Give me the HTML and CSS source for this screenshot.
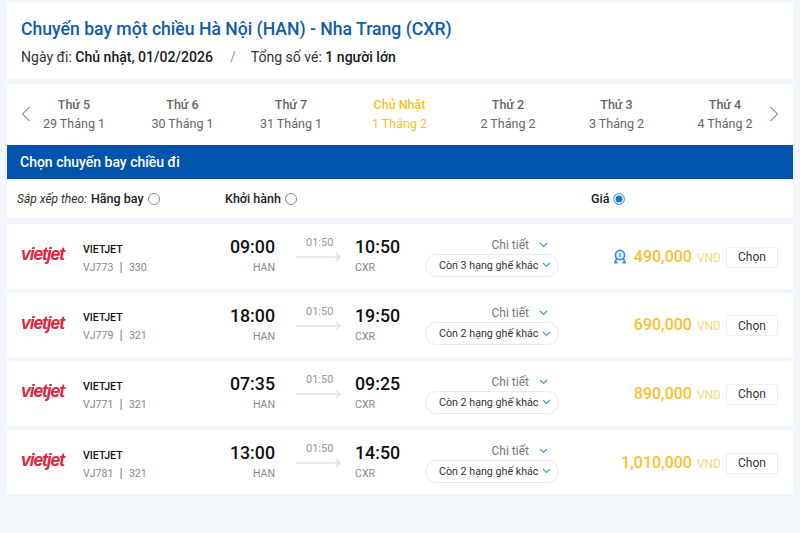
FILE: index.html
```html
<!DOCTYPE html>
<html lang="vi">
<head>
<meta charset="utf-8">
<title>Chuyến bay</title>
<link rel="stylesheet" href="styles.css">
</head>
<body>
<main class="page">
  <section class="summary">
    <h1 class="title">Chuyến bay một chiều Hà Nội (HAN) - Nha Trang (CXR)</h1>
    <p class="meta"><span>Ngày đi: <b>Chủ nhật, 01/02/2026</b></span><i class="slash">/</i><span>Tổng số vé: <b>1 người lớn</b></span></p>
  </section>
  <section class="search">
    <div class="dates">
      <svg class="nav" width="10" height="16" viewBox="0 0 10 16"><path d="M8.5 1 1.5 8l7 7" fill="none" stroke="#555" stroke-width="1"/></svg>
      <div class="date-list">
        <div class="date"><b>Thứ 5</b><span>29 Tháng 1</span></div>
        <div class="date"><b>Thứ 6</b><span>30 Tháng 1</span></div>
        <div class="date"><b>Thứ 7</b><span>31 Tháng 1</span></div>
        <div class="date active"><b>Chủ Nhật</b><span>1 Tháng 2</span></div>
        <div class="date"><b>Thứ 2</b><span>2 Tháng 2</span></div>
        <div class="date"><b>Thứ 3</b><span>3 Tháng 2</span></div>
        <div class="date"><b>Thứ 4</b><span>4 Tháng 2</span></div>
      </div>
      <svg class="nav" width="10" height="16" viewBox="0 0 10 16"><path d="M1.5 1l7 7-7 7" fill="none" stroke="#555" stroke-width="1"/></svg>
    </div>
    <h2 class="bar">Chọn chuyến bay chiều đi</h2>
    <div class="sort">
      <div class="sort-a"><em>Sắp xếp theo:</em> <b>Hãng bay</b><span class="radio"></span></div>
      <div class="sort-b"><b>Khởi hành</b><span class="radio"></span></div>
      <div class="sort-c"><b>Giá</b><span class="radio on"></span></div>
    </div>
  </section>
  <section class="flights">
    <article class="flight">
      <div class="logo">vietjet</div>
      <div class="airline"><b>VIETJET</b><span>VJ773 <i>|</i> 330</span></div>
      <div class="dep"><b>09:00</b><span>HAN</span></div>
      <div class="dur"><span>01:50</span><svg width="46" height="10" viewBox="0 0 46 10"><path d="M0 5h44M40 1l4 4-4 4" fill="none" stroke="#dfe2e5" stroke-width="1.4"/></svg></div>
      <div class="arr"><b>10:50</b><span>CXR</span></div>
      <div class="info">
        <div class="detail">Chi tiết<svg class="chev" width="9" height="6" viewBox="0 0 9 6"><path d="M1 1l3.5 3.5L8 1" fill="none" stroke="#4a9bd4" stroke-width="1.2"/></svg></div>
        <div class="pill">Còn 3 hạng ghế khác<svg class="chev" width="9" height="6" viewBox="0 0 9 6"><path d="M1 1l3.5 3.5L8 1" fill="none" stroke="#4a9bd4" stroke-width="1.2"/></svg></div>
      </div>
      <div class="price">
        <svg class="badge" width="14" height="15" viewBox="0 0 14 15"><circle cx="7" cy="6" r="4.6" fill="#dcecfb" stroke="#2f8fe6" stroke-width="1.6"/><path d="M3.6 9.5 2 13.6h2.6M10.400 9.500 12 13.600H9.400" fill="none" stroke="#2f8fe6" stroke-width="1.8"/><path d="M7 4v4" stroke="#2f8fe6" stroke-width="1.200"/></svg>
        <b>490,000</b><span>VND</span>
      </div>
      <button class="choose">Chọn</button>
    </article>
    <article class="flight">
      <div class="logo">vietjet</div>
      <div class="airline"><b>VIETJET</b><span>VJ779 <i>|</i> 321</span></div>
      <div class="dep"><b>18:00</b><span>HAN</span></div>
      <div class="dur"><span>01:50</span><svg width="46" height="10" viewBox="0 0 46 10"><path d="M0 5h44M40 1l4 4-4 4" fill="none" stroke="#dfe2e5" stroke-width="1.4"/></svg></div>
      <div class="arr"><b>19:50</b><span>CXR</span></div>
      <div class="info">
        <div class="detail">Chi tiết<svg class="chev" width="9" height="6" viewBox="0 0 9 6"><path d="M1 1l3.5 3.5L8 1" fill="none" stroke="#4a9bd4" stroke-width="1.2"/></svg></div>
        <div class="pill">Còn 2 hạng ghế khác<svg class="chev" width="9" height="6" viewBox="0 0 9 6"><path d="M1 1l3.5 3.5L8 1" fill="none" stroke="#4a9bd4" stroke-width="1.2"/></svg></div>
      </div>
      <div class="price"><b>690,000</b><span>VND</span></div>
      <button class="choose">Chọn</button>
    </article>
    <article class="flight">
      <div class="logo">vietjet</div>
      <div class="airline"><b>VIETJET</b><span>VJ771 <i>|</i> 321</span></div>
      <div class="dep"><b>07:35</b><span>HAN</span></div>
      <div class="dur"><span>01:50</span><svg width="46" height="10" viewBox="0 0 46 10"><path d="M0 5h44M40 1l4 4-4 4" fill="none" stroke="#dfe2e5" stroke-width="1.4"/></svg></div>
      <div class="arr"><b>09:25</b><span>CXR</span></div>
      <div class="info">
        <div class="detail">Chi tiết<svg class="chev" width="9" height="6" viewBox="0 0 9 6"><path d="M1 1l3.5 3.5L8 1" fill="none" stroke="#4a9bd4" stroke-width="1.2"/></svg></div>
        <div class="pill">Còn 2 hạng ghế khác<svg class="chev" width="9" height="6" viewBox="0 0 9 6"><path d="M1 1l3.5 3.5L8 1" fill="none" stroke="#4a9bd4" stroke-width="1.2"/></svg></div>
      </div>
      <div class="price"><b>890,000</b><span>VND</span></div>
      <button class="choose">Chọn</button>
    </article>
    <article class="flight">
      <div class="logo">vietjet</div>
      <div class="airline"><b>VIETJET</b><span>VJ781 <i>|</i> 321</span></div>
      <div class="dep"><b>13:00</b><span>HAN</span></div>
      <div class="dur"><span>01:50</span><svg width="46" height="10" viewBox="0 0 46 10"><path d="M0 5h44M40 1l4 4-4 4" fill="none" stroke="#dfe2e5" stroke-width="1.4"/></svg></div>
      <div class="arr"><b>14:50</b><span>CXR</span></div>
      <div class="info">
        <div class="detail">Chi tiết<svg class="chev" width="9" height="6" viewBox="0 0 9 6"><path d="M1 1l3.5 3.5L8 1" fill="none" stroke="#4a9bd4" stroke-width="1.2"/></svg></div>
        <div class="pill">Còn 2 hạng ghế khác<svg class="chev" width="9" height="6" viewBox="0 0 9 6"><path d="M1 1l3.5 3.5L8 1" fill="none" stroke="#4a9bd4" stroke-width="1.2"/></svg></div>
      </div>
      <div class="price"><b>1,010,000</b><span>VND</span></div>
      <button class="choose">Chọn</button>
    </article>
  </section>
</main>
</body>
</html>
```

FILE: styles.css
```css
* { box-sizing: border-box; }
html, body { margin: 0; height: 100%; }
body {
  background: #f3f6fb;
  font-family: Roboto, "Liberation Sans", sans-serif;
  color: #222;
  overflow: hidden;
}
.page { width: 786px; margin-left: 7px; padding-top: 3px; display: flex; flex-direction: column; gap: 5px; }
.summary { background: #fff; height: 76px; padding: 15px 14px 0; }
.title { margin: 0; font-size: 17.6px; line-height: 22px; font-weight: 500; color: #0f5cab; }
.meta { margin: 7px 0 0; font-size: 14.05px; line-height: 20px; color: #333; display: flex; }
.meta b { font-weight: 500; color: #1a1a1a; }
.slash { font-style: normal; color: #999; margin: 0 15px 0 17px; }
.search { background: #fff; }
.dates { height: 61px; display: flex; align-items: center; padding: 0 0 2px 14px; }
.nav { flex: none; }
.date-list { flex: none; width: 759.5px; display: grid; grid-template-columns: repeat(7, 108.5px); margin: 0 -10.25px 0 -11.25px; }
.date { display: flex; flex-direction: column; align-items: center; color: #666; font-size: 12.5px; line-height: 19px; }
.date b { font-weight: 500; font-size: 12.5px; }
.date.active { color: #fbc02d; }
.bar { margin: 0; height: 34px; background: #0054ae; color: #fff; font-size: 14px; line-height: 34px; font-weight: 500; padding-left: 13px; }
.sort { height: 39px; display: grid; grid-template-columns: 208px 366px 1fr; align-items: center; font-size: 12.5px; color: #333; padding: 0 0 0 10px; }
.sort b { font-weight: 500; color: #222; }
.sort em { font-size: 12px; }
.sort-a, .sort-b, .sort-c { display: flex; align-items: center; gap: 4px; }
.radio { width: 12px; height: 12px; border: 1px solid #888; border-radius: 50%; background: #fff; margin-top: 1px; }
.radio.on { border-color: #5aa7ea; background: #1976d2; box-shadow: inset 0 0 0 1.5px #fff; }
.flights { display: flex; flex-direction: column; gap: 4px; margin-top: 1px; }
.flight {
  background: #fff; height: 64.6px; display: grid;
  grid-template-columns: 62px 126px 66px 80px 70px 134px 167px 52px;
  align-items: center; padding: 0 15px 0 14px;
}
.logo { font-family: "Liberation Sans", sans-serif; font-style: italic; font-weight: 700; font-size: 17.5px; letter-spacing: -1.1px; color: #e3243b; margin-top: -3px; }
.airline { display: flex; flex-direction: column; font-size: 10.6px; line-height: 18px; margin-top: 5px; color: #111; }
.airline b { font-weight: 500; }
.airline span { color: #888; font-size: 10.6px; }
.airline i { font-style: normal; margin: 0 3.5px; font-size: 13px; line-height: 14px; color: #777; }
.dep, .arr { display: flex; flex-direction: column; margin-top: -2px; }
.dep { align-items: flex-end; margin-left: -6px; }
.dep b, .arr b { font-size: 17.8px; line-height: 26px; font-weight: 500; color: #111; }
.dep span, .arr span { font-size: 10.6px; line-height: 16px; color: #888; }
.dur { display: flex; flex-direction: column; align-items: flex-start; padding-left: 21px; margin-top: -14px; font-size: 11px; line-height: 14px; color: #999; }
.dur span { margin-left: 10px; }
.dur svg { margin-top: 2px; }
.info { display: flex; flex-direction: column; align-items: flex-end; }
.detail { display: flex; align-items: center; gap: 10px; font-size: 12px; line-height: 18px; color: #777; padding-right: 10px; margin-right: 1px; }
.pill { width: 134px; height: 23px; border: 1px solid #e6e9ee; border-radius: 12px; display: flex; align-items: center; justify-content: space-between; padding: 0 7px 0 13px; font-size: 10.7px; color: #333; white-space: nowrap; }
.chev { flex: none; }
.price { display: flex; align-items: baseline; justify-content: flex-end; gap: 5px; padding-right: 5px; color: #fbc02d; }
.price b { font-size: 16px; font-weight: 500; }
.price span { font-size: 12px; color: #f8d87a; }
.badge { align-self: center; margin-right: 2px; }
.choose { width: 52px; height: 21px; background: #fff; border: 1px solid #eceef1; border-radius: 2px; font: 400 12px Roboto, sans-serif; color: #333; padding: 0; margin-top: 2px; }
```
